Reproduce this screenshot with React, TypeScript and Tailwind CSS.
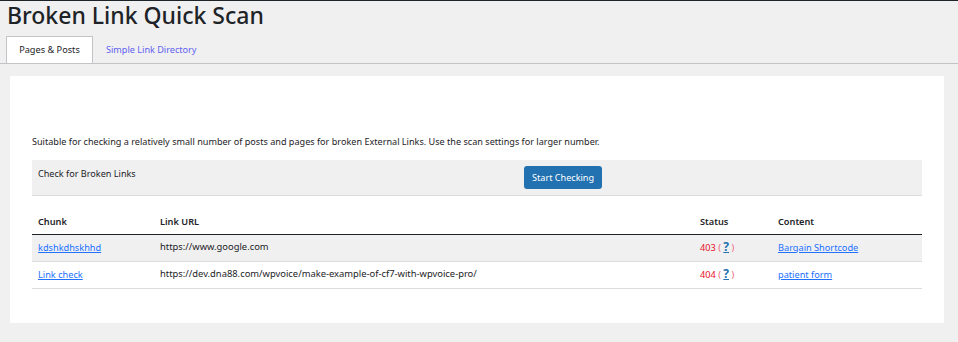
const FONT = "font-['Segoe_UI','Noto_Sans',sans-serif]";

const ROWS = [
  { chunk: "kdshkdhskhhd", url: "https://www.google.com", code: "403", content: "Bargain Shortcode" },
  { chunk: "Link check", url: "https://dev.dna88.com/wpvoice/make-example-of-cf7-with-wpvoice-pro/", code: "404", content: "patient form" },
];

function Tabs() {
  return (
    <div className="mt-[7px] flex h-[27px] items-end border-b border-[#c3c4c7] pl-[6px]">
      <div className="flex h-[27px] w-[87px] items-center justify-center border border-b-0 border-[#c3c4c7] bg-white text-[9.2px] text-[#1d2327]">
        Pages &amp; Posts
      </div>
      <a className="flex h-[26px] items-center px-[13px] text-[9.1px] text-[#6262f2]">Simple Link Directory</a>
    </div>
  );
}

function ScanTable() {
  return (
    <table className="mt-[15px] w-full border-collapse text-left text-[9.2px] text-[#1d2327]">
      <thead>
        <tr className="h-[23px] border-b border-[#1d2327]">
          <th className="w-[128px] pl-[6px] font-semibold">Chunk</th>
          <th className="font-semibold">Link URL</th>
          <th className="w-[78px] font-semibold">Status</th>
          <th className="w-[144px] font-semibold">Content</th>
        </tr>
      </thead>
      <tbody>
        {ROWS.map((r, i) => (
          <tr key={r.chunk} className={`h-[27px] border-b border-[#dcdcde] ${i === 0 ? "bg-[#f0f0f1]" : "bg-white"}`}>
            <td className="pl-[6px]">
              <a className="text-[#2271ff] underline">{r.chunk}</a>
            </td>
            <td className="text-[9.4px]">{r.url}</td>
            <td className="text-[#e8101e]">
              {r.code} <span className="text-[#f0607a]">(</span>{" "}
              <a className="text-[12px] leading-none font-bold text-[#2271b1] underline">?</a>{" "}
              <span className="text-[#f0607a]">)</span>
            </td>
            <td>
              <a className="text-[#2271ff] underline">{r.content}</a>
            </td>
          </tr>
        ))}
      </tbody>
    </table>
  );
}

export default function App() {
  return (
    <div className={`${FONT} h-[342px] w-[958px] overflow-hidden border-t border-[#1d2327] bg-[#f0f0f1]`}>
      <div className="ml-[95px] -mt-px h-px w-[123px] bg-[#d63638]" />
      <h1 className="ml-[7px] mt-0 text-[23px] font-medium leading-[29px] text-[#1d2327]">Broken Link Quick Scan</h1>
      <Tabs />
      <div className="ml-[10px] mt-[12px] h-[247px] w-[934px] bg-white px-[22px] pt-[59px]">
        <p className="text-[9.1px] leading-[13px] text-[#1d2327]">
          Suitable for checking a relatively small number of posts and pages for broken External Links. Use the scan settings for larger number.
        </p>
        <div className="mt-[12px] flex h-[36px] border-b border-[#dcdcde] bg-[#f0f0f1] pl-[6px]">
          <span className="mt-[7px] w-[486px] text-[9.1px] text-[#1d2327]">Check for Broken Links</span>
          <button className="mt-[6px] h-[23px] rounded-[3px] bg-[#2271b1] px-[8px] text-[9.1px] text-white">Start Checking</button>
        </div>
        <ScanTable />
      </div>
    </div>
  );
}
